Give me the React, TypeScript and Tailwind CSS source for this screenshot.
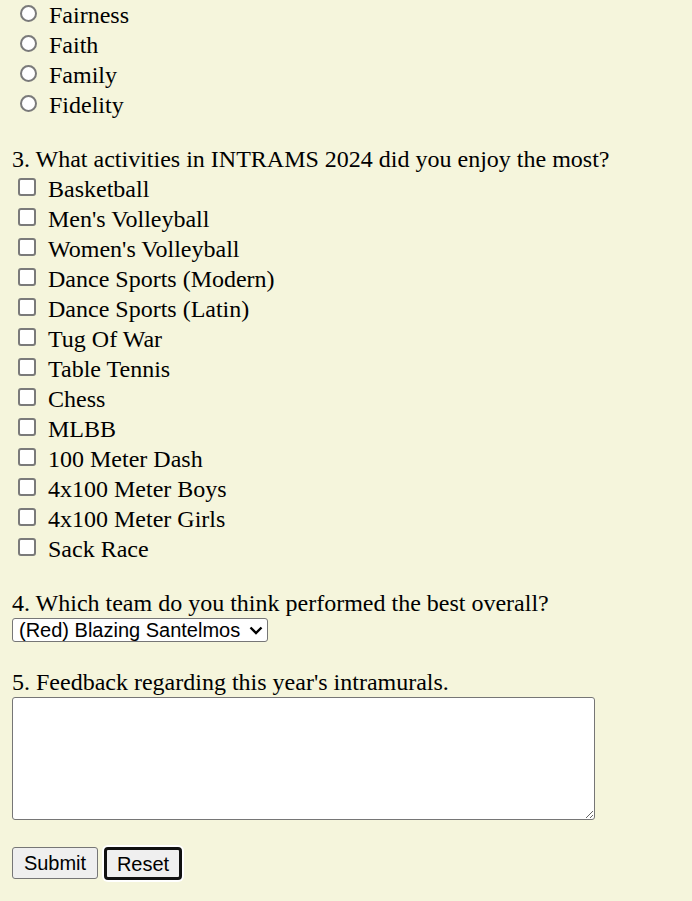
import React from 'react';

const values = ['Fairness', 'Faith', 'Family', 'Fidelity'];

const activities = [
  'Basketball',
  "Men's Volleyball",
  "Women's Volleyball",
  'Dance Sports (Modern)',
  'Dance Sports (Latin)',
  'Tug Of War',
  'Table Tennis',
  'Chess',
  'MLBB',
  '100 Meter Dash',
  '4x100 Meter Boys',
  '4x100 Meter Girls',
  'Sack Race',
];

const teams = [
  '(Red) Blazing Santelmos',
  '(Blue) Azure Agilas',
  '(Green) Emerald Tikbalangs',
  '(Yellow) Golden Sirenas',
];

const App: React.FC = () => {
  return (
    <div className="min-h-screen bg-[#f5f5dc] pl-3 font-['Liberation_Serif','Times_New_Roman',serif] text-[24px] leading-[30px] text-black">
      <form onSubmit={(e) => e.preventDefault()}>
        {/* core values */}
        {values.map((v) => (
          <label key={v} className="flex h-[30px] items-start">
            <input
              type="radio"
              name="value"
              className="ml-[8px] mt-[5px] h-[17px] w-[17px] shrink-0 appearance-none rounded-full border-2 border-[#7a7a7a] bg-white"
            />
            <span className="ml-[12px]">{v}</span>
          </label>
        ))}

        {/* question 3 */}
        <div className="mt-[24px] h-[30px]">3. What activities in INTRAMS 2024 did you enjoy the most?</div>
        {activities.map((a) => (
          <label key={a} className="flex h-[30px] items-start">
            <input
              type="checkbox"
              name="activities"
              className="ml-[6px] mt-[4px] h-[18px] w-[18px] shrink-0 appearance-none rounded-[3px] border-2 border-[#7a7a7a] bg-white"
            />
            <span className="ml-[12px]">{a}</span>
          </label>
        ))}

        {/* question 4 */}
        <div className="mt-[24px] h-[30px]">4. Which team do you think performed the best overall?</div>
        <div className="relative flex h-[24px] w-fit">
          <select
            name="team"
            defaultValue={teams[0]}
            className="block h-[24px] w-[256px] appearance-none rounded-[3px] border border-[#767676] bg-white pl-[6px] font-['Liberation_Sans',Arial,sans-serif] text-[20px] leading-[22px] text-black"
          >
            {teams.map((t) => (
              <option key={t}>{t}</option>
            ))}
          </select>
          <svg
            className="pointer-events-none absolute right-[5px] top-[8px]"
            width="14"
            height="9"
            viewBox="0 0 14 9"
            fill="none"
          >
            <polyline points="1.5,1.5 7,7 12.5,1.5" stroke="#000" strokeWidth="2.4" />
          </svg>
        </div>

        {/* question 5 */}
        <div className="mt-[25px] h-[30px]">5. Feedback regarding this year's intramurals.</div>
        <textarea
          name="feedback"
          className="block h-[123px] w-[583px] rounded-[3px] border border-[#767676] bg-white"
        />

        <div className="mt-[27px] flex items-start gap-[6px] font-['Liberation_Sans',Arial,sans-serif] text-[20px] leading-[24px]">
          <button
            type="submit"
            className="h-[32px] w-[86px] rounded-[3px] border border-[#767676] bg-[#efefef] text-black"
          >
            Submit
          </button>
          <button
            type="reset"
            className="h-[33px] w-[78px] rounded-[4px] border-[3px] border-[#111] bg-[#efefef] text-black shadow-[0_0_0_2px_#fff]"
          >
            Reset
          </button>
        </div>
      </form>
    </div>
  );
};

export default App;
